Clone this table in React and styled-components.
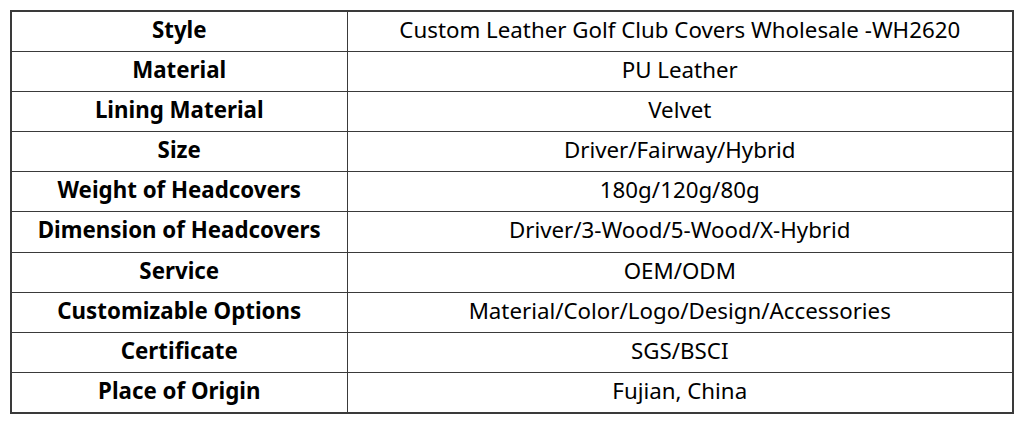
import React from 'react';
import styled, { createGlobalStyle } from 'styled-components';

const GlobalStyle = createGlobalStyle`
  html, body {
    margin: 0;
    padding: 0;
    background: #fff;
  }
`;

const Page = styled.div`
  padding: 10px 10px 0 10px;
  font-family: "Noto Sans", "Open Sans", sans-serif;
  color: #000;
`;

const Table = styled.table`
  width: 1004px;
  border-collapse: collapse;
  table-layout: fixed;
  border: 2px solid #3a3a3a;
`;

const Cell = styled.td`
  height: 40.2px;
  padding: 0 0 3px 0;
  box-sizing: border-box;
  border: 1.5px solid #3a3a3a;
  text-align: center;
  vertical-align: middle;
  font-size: 22.3px;
  line-height: 1;
  font-weight: ${({ $head }) => ($head ? 700 : 400)};
  width: ${({ $head }) => ($head ? '336px' : 'auto')};
`;

const rows = [
  ['Style', 'Custom Leather Golf Club Covers Wholesale -WH2620'],
  ['Material', 'PU Leather'],
  ['Lining Material', 'Velvet'],
  ['Size', 'Driver/Fairway/Hybrid'],
  ['Weight of Headcovers', '180g/120g/80g'],
  ['Dimension of Headcovers', 'Driver/3-Wood/5-Wood/X-Hybrid'],
  ['Service', 'OEM/ODM'],
  ['Customizable Options', 'Material/Color/Logo/Design/Accessories'],
  ['Certificate', 'SGS/BSCI'],
  ['Place of Origin', 'Fujian, China'],
];

const App = () => (
  <Page>
    <GlobalStyle />
    <Table>
      <tbody>
        {rows.map(([label, value]) => (
          <tr key={label}>
            <Cell $head>{label}</Cell>
            <Cell>{value}</Cell>
          </tr>
        ))}
      </tbody>
    </Table>
  </Page>
);

export default App;
